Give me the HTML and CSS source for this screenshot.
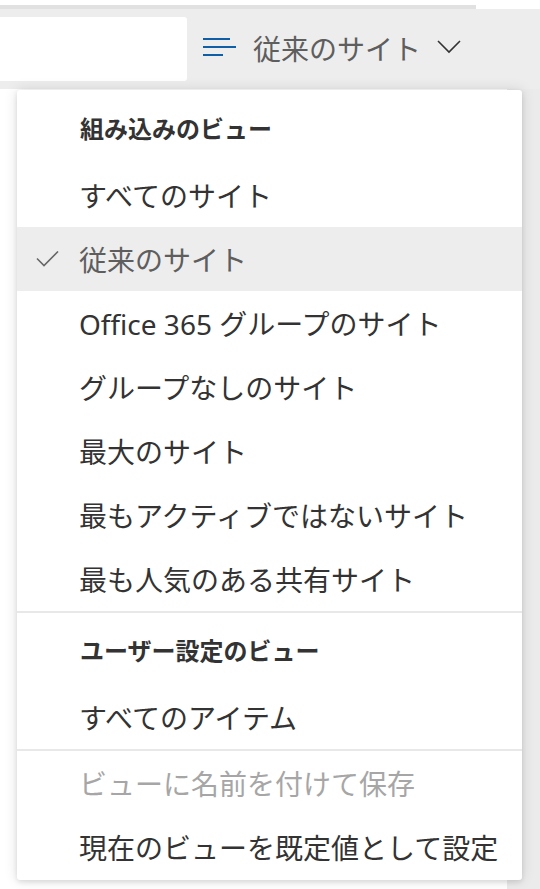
FILE: index.html
```html
<!DOCTYPE html>
<html lang="ja">
<head>
    <meta charset="UTF-8">
    <meta name="viewport" content="width=device-width, initial-scale=1.0">
    <title>サイト</title>
    <link rel="stylesheet" href="styles.css">
</head>
<body>
    <!-- Top strip -->
    <div class="topline">
        <div class="topline-bar"></div>
    </div>

    <!-- Command bar with search and view switcher -->
    <header class="cmdbar">
        <div class="search"></div>
        <button class="view-switch">
            <svg class="view-icon" width="33" height="18" viewBox="0 0 33 18">
                <path d="M0 1h27M0 9h33M0 17h20" stroke="#0f5ea8" stroke-width="2" fill="none"/>
            </svg>
            <span class="view-label">従来のサイト</span>
            <svg class="chevron" width="24" height="14" viewBox="0 0 24 14">
                <path d="M1 1l11 11 11-11" stroke="#333" stroke-width="1.6" fill="none"/>
            </svg>
        </button>
    </header>

    <div class="page">
        <div class="page-main"></div>
        <div class="page-side"></div>
    </div>

    <!-- View dropdown menu -->
    <div class="menu">
        <div class="menu-header">組み込みのビュー</div>
        <div class="menu-item">すべてのサイト</div>
        <div class="menu-item checked">
            <svg class="check" width="24" height="16" viewBox="0 0 24 16">
                <path d="M1 7.5l7 7 14-14" stroke="#666" stroke-width="1.6" fill="none"/>
            </svg>
            従来のサイト
        </div>
        <div class="menu-item">Office 365 グループのサイト</div>
        <div class="menu-item">グループなしのサイト</div>
        <div class="menu-item">最大のサイト</div>
        <div class="menu-item">最もアクティブではないサイト</div>
        <div class="menu-item">最も人気のある共有サイト</div>
        <div class="menu-divider"></div>
        <div class="menu-header">ユーザー設定のビュー</div>
        <div class="menu-item">すべてのアイテム</div>
        <div class="menu-divider"></div>
        <div class="menu-item disabled">ビューに名前を付けて保存</div>
        <div class="menu-item">現在のビューを既定値として設定</div>
    </div>
</body>
</html>
```

FILE: styles.css
```css
/* Reset */
* {
    margin: 0;
    padding: 0;
    box-sizing: border-box;
    font-family: "Noto Sans", "Noto Sans CJK JP", sans-serif;
}

body {
    width: 540px;
    height: 889px;
    overflow: hidden;
    background-color: #fff;
    position: relative;
}

/* Top strip */
.topline {
    height: 9px;
    padding-top: 5px;
}

.topline-bar {
    width: 476px;
    height: 4px;
    background-color: #e1e1e1;
}

/* Command bar */
.cmdbar {
    height: 80px;
    background-color: #ededed;
    display: flex;
    align-items: flex-start;
}

.search {
    width: 187px;
    height: 64px;
    margin-top: 8px;
    background-color: #fff;
    border-radius: 0 3px 3px 0;
}

.view-switch {
    display: flex;
    align-items: center;
    height: 78px;
    margin-left: 16px;
    border: none;
    background: none;
    cursor: pointer;
}

.view-icon {
    margin-top: -2px;
}

.view-label {
    margin-left: 17px;
    font-size: 28px;
    color: #5e5e5e;
}

.chevron {
    margin-left: 16px;
    margin-top: -2px;
}

/* Page body under the bar */
.page {
    display: flex;
    height: 800px;
}

.page-main {
    flex: 1;
}

.page-side {
    width: 33px;
    background-color: #ebebeb;
}

/* Dropdown menu */
.menu {
    position: absolute;
    left: 17px;
    top: 90px;
    width: 505px;
    padding: 1px 0;
    background-color: #fff;
    border-radius: 3px;
    box-shadow: 0 0 14px rgba(0, 0, 0, 0.12), 0 2px 5px rgba(0, 0, 0, 0.1);
}

.menu-header {
    height: 72px;
    display: flex;
    align-items: center;
    padding-left: 63px;
    font-size: 24px;
    font-weight: bold;
    color: #333;
}

.menu-item {
    position: relative;
    height: 64px;
    display: flex;
    align-items: center;
    padding-left: 62px;
    font-size: 28px;
    color: #333;
}

.menu-item.checked {
    background-color: #ededed;
    color: #5e5e5e;
}

.menu-item.disabled {
    color: #a6a6a6;
}

.check {
    position: absolute;
    left: 19px;
    top: 24px;
}

.menu-divider {
    height: 2px;
    background-color: #e8e8e8;
}
```
